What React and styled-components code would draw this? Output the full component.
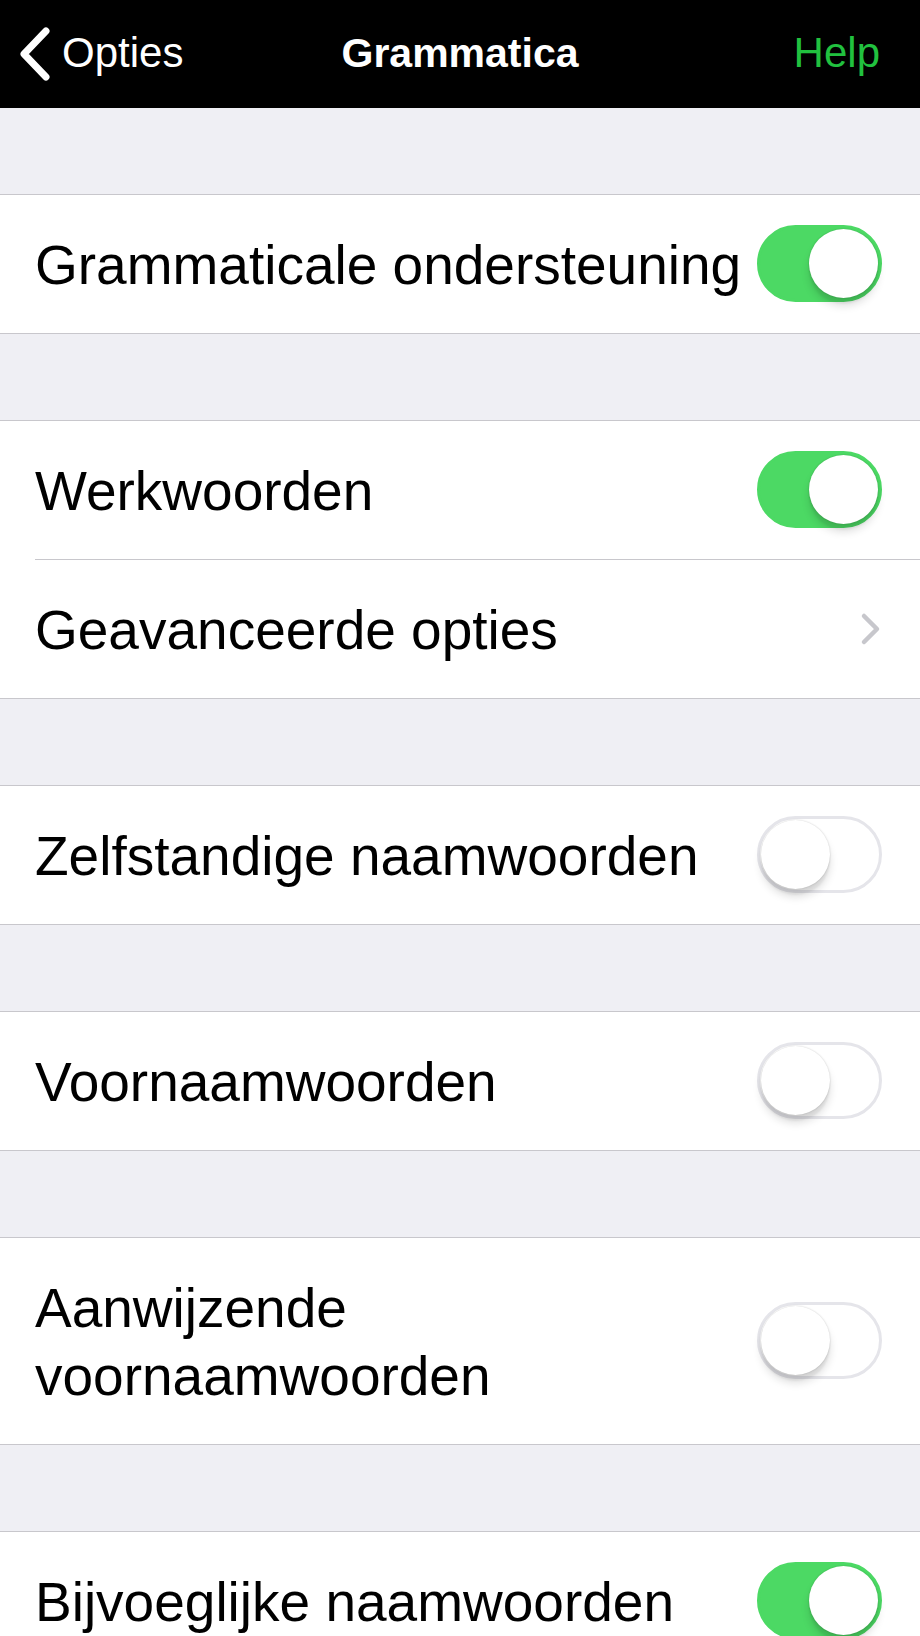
import React from 'react';
import styled, { createGlobalStyle } from 'styled-components';

const GlobalStyle = createGlobalStyle`
    html, body {
        margin: 0;
        padding: 0;
        background: #efeff4;
        font-family: "Liberation Sans", Arial, sans-serif;
        -webkit-font-smoothing: antialiased;
    }
`;

const sections = [
    [{ label: 'Grammaticale ondersteuning', on: true }],
    [
        { label: 'Werkwoorden', on: true },
        { label: 'Geavanceerde opties', link: true },
    ],
    [{ label: 'Zelfstandige naamwoorden', on: false }],
    [{ label: 'Voornaamwoorden', on: false }],
    [{ label: 'Aanwijzende voornaamwoorden', on: false }],
    [{ label: 'Bijvoeglijke naamwoorden', on: true }],
];

function BackChevron() {
    return (
        <svg width="36" height="58" viewBox="0 0 36 58">
            <polyline
                points="30,6 8,29 30,52"
                fill="none"
                stroke="#fff"
                strokeWidth="7"
                strokeLinecap="round"
                strokeLinejoin="round"
            />
        </svg>
    );
}

function Disclosure() {
    return (
        <svg width="22" height="34" viewBox="0 0 22 34">
            <polyline
                points="4,4 17,17 4,30"
                fill="none"
                stroke="#c7c7cc"
                strokeWidth="4.5"
                strokeLinecap="round"
                strokeLinejoin="round"
            />
        </svg>
    );
}

function Switch({ on }) {
    return (
        <Track $on={on}>
            <Knob />
        </Track>
    );
}

export default function App() {
    return (
        <>
            <GlobalStyle />
            <NavBar>
                <BackButton>
                    <BackChevron />
                    <span>Opties</span>
                </BackButton>
                <Title>Grammatica</Title>
                <HelpButton>Help</HelpButton>
            </NavBar>
            <List>
                {sections.map((rows, i) => (
                    <Section key={i}>
                        {rows.map((row, j) => (
                            <React.Fragment key={row.label}>
                                {j > 0 && <Divider />}
                                <Row>
                                    <Label>{row.label}</Label>
                                    {row.link ? <Disclosure /> : <Switch on={row.on} />}
                                </Row>
                            </React.Fragment>
                        ))}
                    </Section>
                ))}
            </List>
        </>
    );
}

const NavBar = styled.header`
    height: 108px;
    background: #000;
    display: grid;
    grid-template-columns: 1fr auto 1fr;
    align-items: center;
    color: #fff;
    font-size: 42px;
`;

const BackButton = styled.div`
    display: flex;
    align-items: center;
    gap: 10px;
    padding-left: 16px;
    padding-bottom: 2px;

    svg {
        display: block;
        margin-top: 2px;
    }
`;

const Title = styled.div`
    font-weight: 700;
    font-size: 41px;
    padding-bottom: 2px;
`;

const HelpButton = styled.div`
    justify-self: end;
    padding-right: 40px;
    padding-bottom: 2px;
    color: #21c13f;
`;

const List = styled.main`
    display: flex;
    flex-direction: column;
    gap: 86px;
    padding-top: 86px;
    padding-bottom: 86px;
`;

const Section = styled.section`
    background: #fff;
    border-top: 1px solid #c8c7cc;
    border-bottom: 1px solid #c8c7cc;
`;

const Divider = styled.div`
    height: 1px;
    margin-left: 35px;
    background: #c8c7cc;
`;

const Row = styled.div`
    display: flex;
    align-items: center;
    gap: 8px;
    padding: 0 38px 0 35px;
`;

const Label = styled.div`
    flex: 1;
    padding: 36px 0 34px;
    font-size: 55px;
    line-height: 68px;
    color: #000;
`;

const Track = styled.span`
    box-sizing: border-box;
    flex: none;
    width: 125px;
    height: 77px;
    border-radius: 39px;
    padding: 1px;
    display: flex;
    align-items: center;
    justify-content: ${(p) => (p.$on ? 'flex-end' : 'flex-start')};
    background: ${(p) => (p.$on ? '#4cd964' : '#fff')};
    border: 3px solid ${(p) => (p.$on ? '#4cd964' : '#e5e5ea')};
    margin-top: -2px;
`;

const Knob = styled.span`
    width: 69px;
    height: 69px;
    border-radius: 50%;
    background: #fff;
    box-shadow: 0 8px 9px rgba(0, 0, 0, 0.13), 0 0 2px rgba(0, 0, 0, 0.2), 0 6px 2px rgba(0, 0, 0, 0.05);
`;
